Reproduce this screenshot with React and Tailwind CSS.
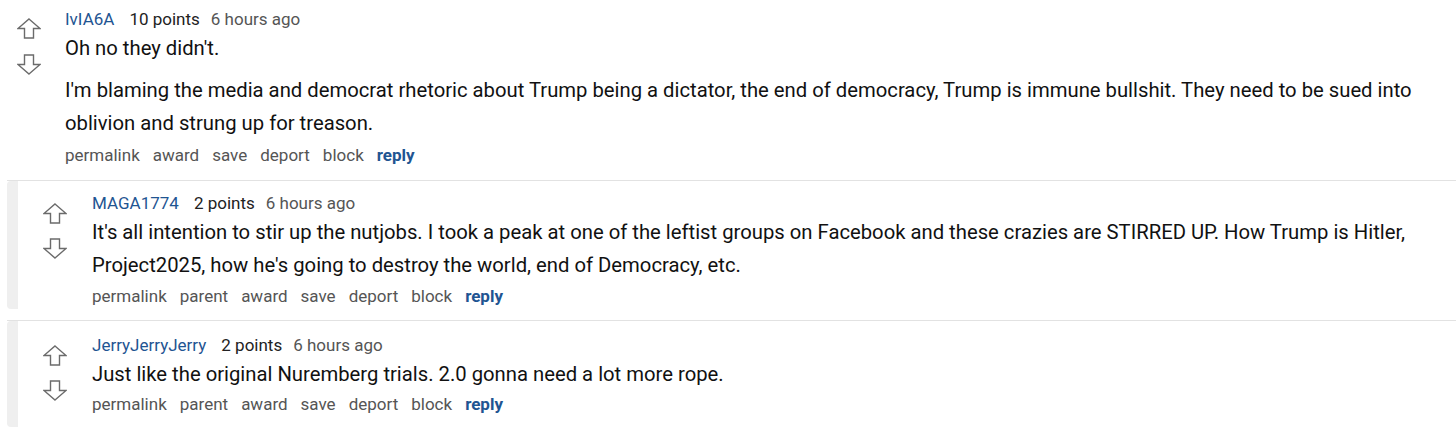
import React from "react";

const ArrowUp = () => (
  <svg width="24" height="21" viewBox="0 0 24 21" fill="none">
    <path d="M12 1 L23 10.5 L16.5 10.5 L16.5 20 L7.5 20 L7.5 10.5 L1 10.5 Z" stroke="#6b6b6b" strokeWidth="1.4" strokeLinejoin="miter" />
  </svg>
);

const ArrowDown = () => (
  <svg width="24" height="21" viewBox="0 0 24 21" fill="none">
    <path d="M12 20 L23 10.5 L16.5 10.5 L16.5 1 L7.5 1 L7.5 10.5 L1 10.5 Z" stroke="#6b6b6b" strokeWidth="1.4" strokeLinejoin="miter" />
  </svg>
);

function Meta({ user, points }) {
  return (
    <div className="flex items-baseline text-[17px] leading-[22px]">
      <span className="text-[#1f5592]">{user}</span>
      <span className="ml-[15px] text-[#222]">{points}</span>
      <span className="ml-[11px] text-[#555]">6 hours ago</span>
    </div>
  );
}

function Actions({ parent }) {
  const items = ["permalink", ...(parent ? ["parent"] : []), "award", "save", "deport", "block"];
  return (
    <div className="flex gap-[13px] text-[17px] leading-[22px] text-[#555]">
      {items.map((i) => (
        <span key={i}>{i}</span>
      ))}
      <span className="font-bold text-[#1f5592]">reply</span>
    </div>
  );
}

function Votes({ gap }) {
  return (
    <div className={`flex flex-col items-center ${gap}`}>
      <ArrowUp />
      <ArrowDown />
    </div>
  );
}

function Child({ user, children, bottom, top }) {
  return (
    <div className={`ml-[7px] border-t border-[#e2e2e2] flex ${bottom}`}>
      <div className="w-[11px] shrink-0 bg-[#efefef] rounded-l-[4px]" />
      <div className={`flex min-w-0 pl-[25px] pb-[2px] ${top}`}>
        <div className="pt-[11px] w-[24px] shrink-0">
          <Votes gap="gap-[14px]" />
        </div>
        <div className="min-w-0 pl-[25px] pr-[20px]">
          <Meta user={user} points="2 points" />
          {children}
        </div>
      </div>
    </div>
  );
}

export default function App() {
  return (
    <div className="w-[1456px] h-[430px] bg-white font-['Roboto',sans-serif] overflow-hidden">
      <div className="flex pl-[17px] pt-[8px] pb-[14px]">
        <div className="pt-[10px] w-[24px] shrink-0">
          <Votes gap="gap-[15px]" />
        </div>
        <div className="min-w-0 pl-[24px] pr-[20px]">
          <Meta user="IvIA6A" points="10 points" />
          <p className="mt-[5px] text-[20.25px] leading-[26px] text-[#111]">Oh no they didn't.</p>
          <p className="mt-[13px] text-[20.25px] leading-[33px] text-[#111]">
            I'm blaming the media and democrat rhetoric about Trump being a dictator, the end of democracy, Trump is immune bullshit. They need to be sued into oblivion and strung up for treason.
          </p>
          <div className="mt-[4px]">
            <Actions />
          </div>
        </div>
      </div>

      <Child user="MAGA1774" bottom="mb-[11px]" top="pt-[11px]">
        <p className="mt-[2px] text-[20.25px] leading-[33px] text-[#111]">
          It's all intention to stir up the nutjobs. I took a peak at one of the leftist groups on Facebook and these crazies are STIRRED UP. How Trump is Hitler, Project2025, how he's going to destroy the world, end of Democracy, etc.
        </p>
        <div className="mt-[3px]">
          <Actions parent />
        </div>
      </Child>

      <Child user="JerryJerryJerry" bottom="" top="pt-[13px]">
        <p className="mt-[2px] text-[20.25px] leading-[33px] text-[#111]">
          Just like the original Nuremberg trials. 2.0 gonna need a lot more rope.
        </p>
        <div className="mt-[2px] pb-[10px]">
          <Actions parent />
        </div>
      </Child>
    </div>
  );
}
